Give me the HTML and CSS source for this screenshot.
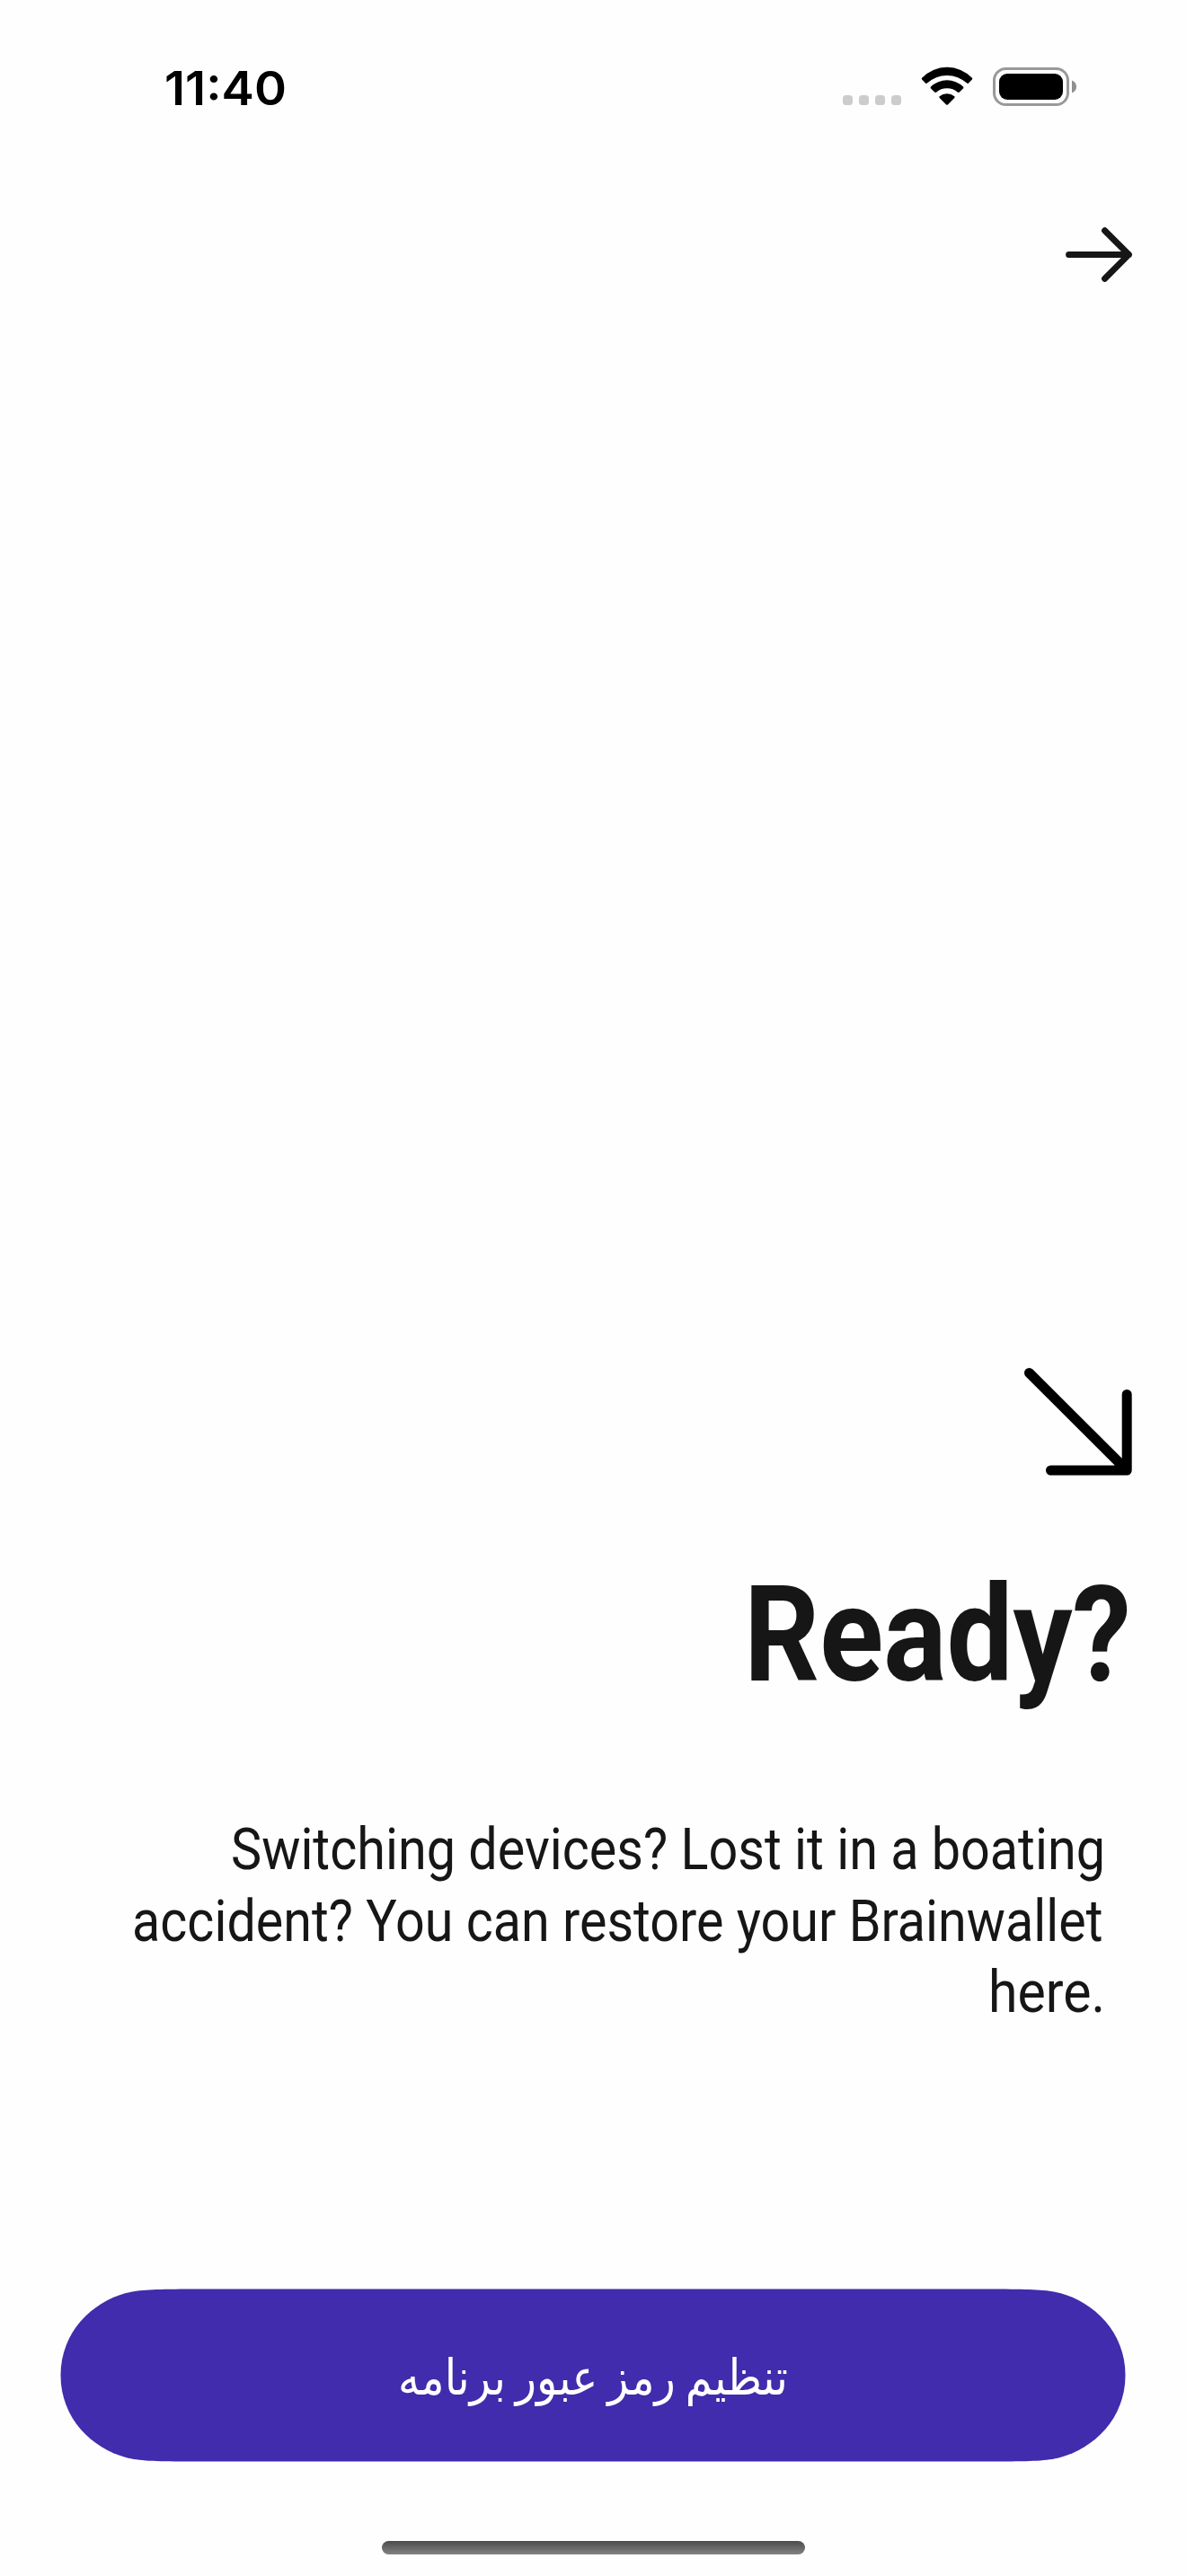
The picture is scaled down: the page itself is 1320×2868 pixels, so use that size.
FILE: index.html
```html
<!DOCTYPE html>
<html lang="fa">
<head>
<meta charset="utf-8">
<title>Brainwallet</title>
<link rel="stylesheet" href="styles.css">
</head>
<body>
<div class="screen">
  <header class="status">
    <svg class="time" width="140" height="60" viewBox="182 70 140 60"><text x="183" y="117" textLength="136" lengthAdjust="spacingAndGlyphs">11:40</text></svg>
    <div class="indicators">
      <div class="signal"><i></i><i></i><i></i><i></i></div>
      <svg class="wifi" width="58" height="44" viewBox="104.5 24 58 44">
        <path d="M105.6 36.8A38.5 38.5 0 0 1 161.4 36.8Q162.3 37.7 161.4 38.6L157.3 42.7Q156.5 43.5 155.6 42.6A32.4 32.4 0 0 0 111.4 42.6Q110.5 43.5 109.7 42.7L105.6 38.6Q104.7 37.7 105.6 36.8Z"/>
        <path d="M115.5 46.6A26 26 0 0 1 151.5 46.6Q152.4 47.5 151.5 48.4L147.4 52.6Q146.5 53.5 145.5 52.7A18.8 18.8 0 0 0 121.5 52.7Q120.5 53.5 119.6 52.6L115.5 48.4Q114.6 47.5 115.5 46.6Z"/>
        <path d="M125.2 57.2A13 13 0 0 1 141.8 57.2Q142.7 58 141.8 58.9L134.4 66.4Q133.5 67.3 132.6 66.4L125.2 58.9Q124.3 58 125.2 57.2Z"/>
      </svg>
      <svg class="battery" width="94" height="44" viewBox="0 0 94 44">
        <rect x="1.5" y="1.5" width="82" height="40" rx="13" fill="none" stroke="#999" stroke-width="3"/>
        <rect x="7" y="7" width="71" height="29" rx="9"/>
        <path d="M88 14.500Q93 16.500 93 21.500T88 28.500Z" fill="#8f8f8f"/>
      </svg>
    </div>
  </header>
  <nav class="nav">
    <svg width="75" height="62" viewBox="1185 252 75 62"><path class="arrow" d="M1189.600 283.400H1256.400M1229.600 256.700L1256.400 283.400L1229.600 310.200"/></svg>
  </nav>
  <main class="intro">
    <svg class="pointer" width="120" height="120" viewBox="1140 1523 120 120"><path class="arrow-big" d="M1145.500 1528.500L1254.200 1637M1254.200 1552.500V1637H1169.500"/></svg>
    <svg class="title" width="440" height="180" viewBox="820 1730 440 180"><text x="828" y="1871" textLength="431" lengthAdjust="spacingAndGlyphs">Ready?</text></svg>
    <svg class="copy" width="1120" height="260" viewBox="140 2010 1120 260">
      <text x="257" y="2081" textLength="973" lengthAdjust="spacingAndGlyphs">Switching devices? Lost it in a boating</text>
      <text x="147" y="2161" textLength="1080.500" lengthAdjust="spacingAndGlyphs">accident? You can restore your Brainwallet</text>
      <text x="1100" y="2240" textLength="130" lengthAdjust="spacingAndGlyphs">here.</text>
    </svg>
  </main>
  <button class="action" type="button">
    <svg width="1186" height="193" viewBox="0 0 1186 193">
      <path class="pill" d="M140 .4C105 .8 88 1 73 5C36 15 .5 48 .5 96.500S36 178 73 188C88 192 105 192.200 140 192.600H1046C1081 192.200 1098 192 1113 188C1150 178 1185.500 145 1185.500 96.500S1150 15 1113 5C1098 1 1081 .8 1046 .4Z"/>
      <text class="label" x="593" y="118" text-anchor="middle" direction="rtl" textLength="434" lengthAdjust="spacingAndGlyphs">تنظیم رمز عبور برنامه</text>
    </svg>
  </button>
  <div class="home"></div>
</div>
</body>
</html>
```
FILE: styles.css
```css
body { margin: 0; background: #fefefe; }
svg { display: block; flex: none; overflow: visible; }
.screen {
  box-sizing: border-box;
  width: 1320px;
  height: 2868px;
  display: flex;
  flex-direction: column;
  background: #fefefe;
}
.status {
  height: 130px;
  box-sizing: border-box;
  padding: 70px 121px 0 182px;
  display: flex;
  justify-content: space-between;
}
.time text { font: 600 52px Inter, sans-serif; fill: #000; }
.indicators { display: flex; align-items: flex-start; padding-top: 5px; }
.signal { display: flex; gap: 7px; padding-top: 31px; margin-right: 22px; }
.signal i { width: 11px; height: 11px; border-radius: 3.5px; background: #ccc; }
.wifi { margin-top: -1px; margin-right: 22.5px; }
.nav { display: flex; justify-content: flex-end; padding: 122px 60px 0 0; }
.arrow { fill: none; stroke: #161616; stroke-width: 7; stroke-linecap: round; stroke-linejoin: round; }
.intro { display: flex; flex-direction: column; align-items: flex-end; padding: 1209px 60px 0 0; }
.arrow-big { fill: none; stroke: #000; stroke-width: 11; stroke-linecap: round; stroke-linejoin: round; }
.title { margin-top: 87px; }
.title text { font: 700 148px Roboto, sans-serif; fill: #161616; }
.copy { margin-top: 100px; }
.copy text { font: 400 65px Roboto, sans-serif; fill: #161616; }
.action {
  margin: 278px 0 0 67px;
  padding: 0;
  border: 0;
  width: 1186px;
  background: none;
}
.pill { fill: #402cac; }
.label { font: 400 55px "DejaVu Sans", sans-serif; word-spacing: -5px; fill: #fff; }
.home {
  width: 471px;
  height: 15px;
  margin: 88px 0 0 425px;
  border-radius: 8px;
  background: linear-gradient(#4a4b4a, #828282);
}
```
